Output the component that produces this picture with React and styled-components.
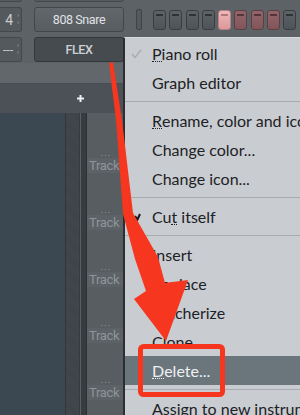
import React from "react";
import styled, { createGlobalStyle, css } from "styled-components";

const GlobalStyle = createGlobalStyle`
  html, body {
    margin: 0;
    padding: 0;
    background: #3b4751;
  }
  body {
    font-family: Roboto, "Liberation Sans", sans-serif;
  }
`;

const Screen = styled.div`
  position: relative;
  width: 300px;
  height: 415px;
  overflow: hidden;
  display: flex;
  flex-direction: column;
  background: #5d6266;
`;

const Rack = styled.div`
  display: flex;
  flex-direction: column;
  gap: 5px;
  margin-top: -23px;
  padding-bottom: 1px;
`;

const ChannelRow = styled.div`
  display: flex;
  align-items: center;
  height: 25px;
  flex-shrink: 0;
`;

const NumBox = styled.div`
  box-sizing: border-box;
  width: 22px;
  height: 25px;
  display: flex;
  align-items: center;
  justify-content: flex-end;
  gap: 4px;
  background: #54595d;
  border: 1px solid #43484c;
  border-left: none;
  border-radius: 0 3px 3px 0;
  color: #c9cdd0;
  font-size: 14px;
  line-height: 14px;
`;

const Value = styled.span`
  white-space: nowrap;
  font-size: ${({ $dash }) => ($dash ? "12px" : "14px")};
`;

const Spinner = styled.div`
  width: 4px;
  display: flex;
  flex-direction: column;
  font-size: 7px;
  line-height: 7px;
  color: #989da1;
`;

const NameButton = styled.div`
  box-sizing: border-box;
  margin-left: 12px;
  width: 90px;
  height: 25px;
  display: flex;
  align-items: center;
  justify-content: center;
  border-radius: 3px;
  font-size: 12.5px;
  letter-spacing: -0.4px;
  ${({ $dark }) =>
    $dark
      ? css`
          background: #464b4f;
          border: 1px solid #33373a;
          color: #cdd1d4;
          font-weight: 500;
        `
      : css`
          background: linear-gradient(#62676b, #575c60);
          border: 1px solid #42474a;
          color: #e0e3e5;
        `}
`;

const Slot = styled.div`
  box-sizing: border-box;
  margin-left: 12px;
  width: 6px;
  height: 21px;
  border: 1px solid #3e4346;
  border-radius: 2px;
  background: #54595d;
`;

const Steps = styled.div`
  display: flex;
  gap: 3.3px;
  margin-left: 11px;
`;

const stepColors = {
  off: ["#5e6367", "#4e5357", "#393d40", "#2f3336"],
  lit: ["#f0b8bb", "#db989b", "#b67f82", "#b3777a"],
  on: ["#94656a", "#80555a", "#5c3f42", "#54363a"],
};

const Step = styled.div`
  box-sizing: border-box;
  width: 13px;
  height: 20px;
  border-radius: 3px;
  background: linear-gradient(
    ${({ $kind }) => stepColors[$kind][0]},
    ${({ $kind }) => stepColors[$kind][1]}
  );
  border: 1px solid ${({ $kind }) => stepColors[$kind][2]};
  display: flex;
  justify-content: center;
  padding-top: 3px;

  &::before {
    content: "";
    width: 7px;
    height: 2px;
    background: ${({ $kind }) => stepColors[$kind][3]};
  }
`;

const Strip = styled.div`
  height: 20px;
  flex-shrink: 0;
  background: #62676b;
`;

const Toolbar = styled.div`
  height: 30px;
  flex-shrink: 0;
  display: flex;
  align-items: center;
  padding-left: 77px;
  background: #4b5156;
  border-top: 1px solid #474c50;
  box-sizing: border-box;
`;

const Main = styled.div`
  flex: 1;
  display: flex;
  min-height: 0;
`;

const SlatePanel = styled.div`
  width: 65px;
  background: #3b4751;
`;

const ScrollStrip = styled.div`
  width: 15px;
  box-sizing: border-box;
  border-left: 1px solid #30363a;
  border-right: 1px solid #353b3f;
  background: repeating-linear-gradient(45deg, #41474b 0 1px, #3d4347 1px 2px);
`;

const Gutter = styled.div`
  width: 7px;
  box-sizing: border-box;
  background: #363c40;
  border-left: 1px solid #5a6064;
  border-right: 1px solid #2c3134;
`;

const TrackColumn = styled.div`
  width: 38px;
  padding-top: 35px;
  background: #575d61;
  display: flex;
  flex-direction: column;
`;

const TrackCell = styled.div`
  height: 56.75px;
  flex-shrink: 0;
  padding-top: 2px;
  box-sizing: border-box;
`;

const Dots = styled.div`
  height: 8px;
  line-height: 6px;
  text-align: center;
  font-size: 10px;
  letter-spacing: 1px;
  color: #8a9196;
`;

const TrackLabel = styled.div`
  height: 15px;
  line-height: 15px;
  padding-left: 2px;
  background: #5c6266;
  color: #8e959a;
  font-size: 13px;
  letter-spacing: -0.3px;
  white-space: nowrap;
`;

const Playlist = styled.div`
  flex: 1;
  background: #5a6064;
`;

const Menu = styled.div`
  position: absolute;
  left: 123px;
  top: 37px;
  right: 0;
  bottom: 0;
  padding-top: 1px;
  background: #c9cdd1;
  border-left: 2px solid #2b2f32;
  border-top: 1px solid #d7dadd;
  font-family: Lato, "Open Sans", sans-serif;
  font-size: 16px;
  color: #1d2125;
`;

const MenuItem = styled.div`
  height: 29px;
  display: flex;
  align-items: center;
  white-space: nowrap;
  ${({ $active }) =>
    $active &&
    css`
      background: #6b767c;
      color: #eef0f1;
    `}
`;

const CheckSlot = styled.div`
  width: 27px;
  flex-shrink: 0;
  display: flex;
  align-items: center;
  padding-left: ${({ $inset }) => $inset}px;
  box-sizing: border-box;
`;

const Key = styled.span`
  border-bottom: 1px dotted currentColor;
  line-height: 15px;
  display: inline-block;
`;

const Separator = styled.div`
  height: 9px;
  display: flex;
  align-items: center;

  &::before {
    content: "";
    flex: 1;
    height: 1px;
    background: #a7acb0;
  }
`;

const Overlay = styled.svg`
  position: absolute;
  left: 0;
  top: 0;
  width: 300px;
  height: 415px;
  pointer-events: none;
`;

const StepRow = ({ kinds }) => (
  <Steps>
    {kinds.map((k, i) => (
      <Step key={i} $kind={k} />
    ))}
  </Steps>
);

const Check = ({ light }) =>
  light ? (
    <svg width="11" height="10" viewBox="0 0 11 10">
      <polyline
        points="1,5 4,8.5 10,1"
        fill="none"
        stroke="#a6abaf"
        strokeWidth="1.3"
      />
    </svg>
  ) : (
    <svg width="7" height="8" viewBox="0 0 7 8">
      <polyline
        points="1,3 3.5,6.5 6,1"
        fill="none"
        stroke="#15181a"
        strokeWidth="2"
      />
    </svg>
  );

const menu = [
  { label: "Piano roll", key: 0, check: "light" },
  { label: "Graph editor" },
  "sep",
  { label: "Rename, color and icon...", key: 0 },
  { label: "Change color..." },
  { label: "Change icon..." },
  "sep",
  { label: "Cut itself", key: 2, check: "dark" },
  "sep",
  { label: "Insert" },
  { label: "Replace" },
  { label: "Patcherize" },
  { label: "Clone" },
  { label: "Delete...", key: 0, active: true },
  "sep",
  { label: "Assign to new instrument track" },
];

const Label = ({ text, k }) =>
  k === undefined ? (
    <span>{text}</span>
  ) : (
    <span>
      {text.slice(0, k)}
      <Key>{text[k]}</Key>
      {text.slice(k + 1)}
    </span>
  );

const grey = ["off", "off", "off", "off", "off", "off", "off", "off", "off"];
const pattern = ["off", "off", "off", "off", "lit", "on", "on", "on", "off"];

const Arrows = () => (
  <Spinner>
    <span>›</span>
    <span>‹</span>
  </Spinner>
);

const App = () => (
  <>
    <GlobalStyle />
    <Screen>
      <Rack>
        <ChannelRow>
          <NumBox />
          <NameButton />
          <Slot />
          <StepRow kinds={grey} />
        </ChannelRow>
        <ChannelRow>
          <NumBox>
            <Value>4</Value>
            <Arrows />
          </NumBox>
          <NameButton>808 Snare</NameButton>
          <Slot />
          <StepRow kinds={pattern} />
        </ChannelRow>
        <ChannelRow>
          <NumBox>
            <Value $dash>---</Value>
            <Arrows />
          </NumBox>
          <NameButton $dark>FLEX</NameButton>
        </ChannelRow>
      </Rack>
      <Strip />
      <Toolbar>
        <svg width="7" height="7" viewBox="0 0 7 7">
          <path d="M3.5 0v7M0 3.5h7" stroke="#eceef0" strokeWidth="2" />
        </svg>
      </Toolbar>
      <Main>
        <SlatePanel />
        <ScrollStrip />
        <Gutter />
        <TrackColumn>
          {[0, 1, 2, 3, 4].map((i) => (
            <TrackCell key={i}>
              <Dots>...</Dots>
              <TrackLabel>Track</TrackLabel>
            </TrackCell>
          ))}
        </TrackColumn>
        <Playlist />
      </Main>

      <Menu>
        {menu.map((item, i) =>
          item === "sep" ? (
            <Separator key={i} />
          ) : (
            <MenuItem key={i} $active={item.active}>
              <CheckSlot $inset={item.check === "dark" ? 9 : 6}>
                {item.check && <Check light={item.check === "light"} />}
              </CheckSlot>
              <Label text={item.label} k={item.key} />
            </MenuItem>
          )
        )}
      </Menu>

      <Overlay viewBox="0 0 300 415">
        <polygon
          fill="#f6361f"
          points="109,63 113,62 122,120 133,213 158,257 165,283 188,280 166,341 134,299 146,291 135,259 123,214 116,120"
        />
        <rect
          x="140.5"
          y="346.5"
          width="82"
          height="48"
          rx="3"
          fill="none"
          stroke="#f6361f"
          strokeWidth="5"
        />
      </Overlay>
    </Screen>
  </>
);

export default App;
